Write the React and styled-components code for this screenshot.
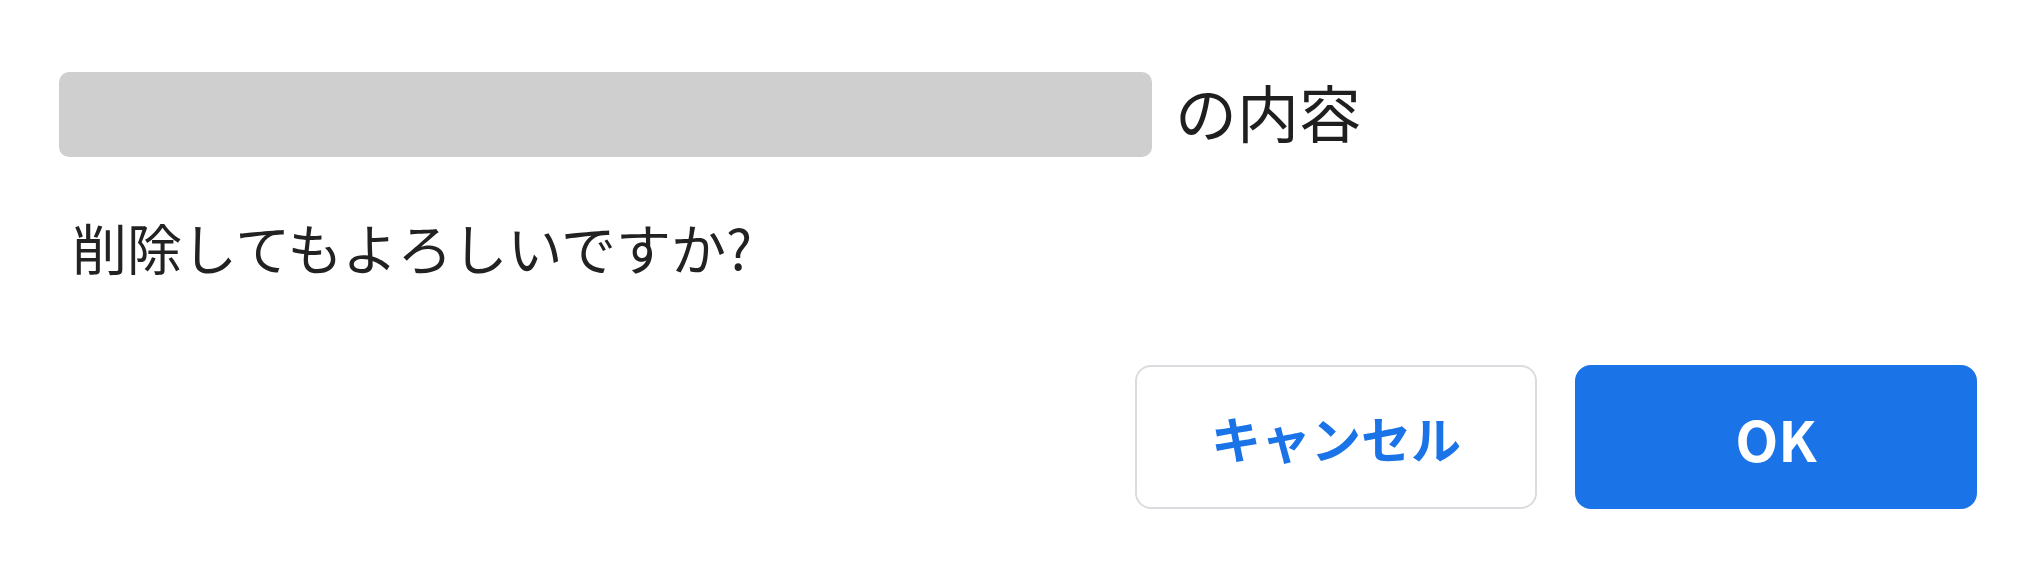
import React from 'react';
import styled, { createGlobalStyle } from 'styled-components';

const GlobalStyle = createGlobalStyle`
  html, body {
    margin: 0;
    padding: 0;
    background: #ffffff;
  }
  body {
    font-family: "Noto Sans CJK JP", "Noto Sans", sans-serif;
    color: #222222;
  }
`;

const Dialog = styled.div`
  display: flex;
  flex-direction: column;
  padding: 72px 67px 0 59px;
`;

const TitleRow = styled.div`
  display: flex;
  align-items: center;
  gap: 23px;
  height: 85px;
`;

const Redacted = styled.div`
  width: 1093px;
  height: 85px;
  border-radius: 10px;
  background: #d0cfd0;
`;

const Title = styled.h2`
  margin: 0;
  font-size: 62px;
  font-weight: 400;
  line-height: 85px;
  color: #1f1f1f;
  margin-top: -6px;
`;

const Message = styled.p`
  margin: 49px 0 0;
  padding-left: 13px;
  font-size: 55px;
  line-height: 81px;
  color: #222222;
`;

const Actions = styled.div`
  display: flex;
  justify-content: flex-end;
  gap: 38px;
  margin-top: 78px;
`;

const Button = styled.button`
  width: 402px;
  height: 144px;
  border-radius: 16px;
  font-family: "Noto Sans CJK JP", "Noto Sans", sans-serif;
  font-weight: 700;
  font-size: ${(p) => (p.$primary ? '56px' : '50px')};
  cursor: pointer;
  border: 2px solid ${(p) => (p.$primary ? '#1b73e8' : '#dcdce0')};
  background: ${(p) => (p.$primary ? '#1b73e8' : '#ffffff')};
  color: ${(p) => (p.$primary ? '#ffffff' : '#1b73e8')};
  display: flex;
  align-items: center;
  justify-content: center;
  padding: 0;
`;

const App = () => {
  return (
    <>
      <GlobalStyle />
      <Dialog>
        <TitleRow>
          <Redacted />
          <Title>の内容</Title>
        </TitleRow>
        <Message>削除してもよろしいですか?</Message>
        <Actions>
          <Button>キャンセル</Button>
          <Button $primary>OK</Button>
        </Actions>
      </Dialog>
    </>
  );
};

export default App;
